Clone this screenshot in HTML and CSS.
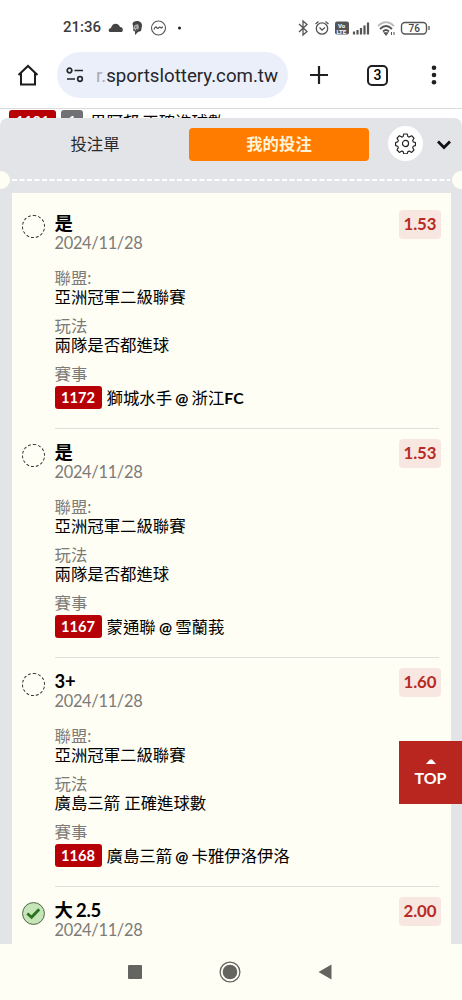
FILE: index.html
```html
<!DOCTYPE html>
<html lang="zh-Hant">
<head>
<meta charset="utf-8">
<title>我的投注</title>
<link rel="stylesheet" href="styles.css">
</head>
<body>
<div class="phone">
  <header class="status">
    <span class="clock">21:36</span>
    <svg class="notices" width="80" height="18" viewBox="0 0 80 18">
      <path d="M1.500 13c-2-2 0-4 1.500-4 1-5 7-6 9-1 3 0 3.500 3 2 5z" fill="#444"/>
      <path d="M24.500 4.500c2-4 10-3 9.500 2.500l-1 5-3 1-3 3v-3.500l-2-1 .5-2z" fill="#444"/><path d="M26 6.500l4-1.500 1 3-1 3-3 .5-1-2z" fill="#aaa"/><path d="M27 8h1.500M28 10.500h1.500" stroke="#444"/>
      <circle cx="50.500" cy="9" r="7" fill="none" stroke="#555" stroke-width="1.100"/>
      <path d="M46 10.500c1-3 2-3 3-1.500s2.500-2 3.500-.5 1-1 2.500 0" fill="none" stroke="#555" stroke-width="1.300"/>
      <circle cx="71.500" cy="9" r="1.500" fill="#222"/>
    </svg>
    <svg class="signals" width="136" height="18" viewBox="0 0 136 18" fill="none" stroke="#555" stroke-width="1.300">
      <path d="M1 5l8 7.500-4 3.500V2l4 3.500L1 13"/>
      <circle cx="24" cy="9.500" r="5.700"/><path d="M21.500 8.500l2.500 2.500 3-2.500M17.500 5l3-2.500M27.500 2.500l3 2.500"/>
      <rect x="37" y="2.500" width="14" height="13" rx="2" fill="#555" stroke="none"/>
      <g class="volte"><text x="40" y="8.500">Vo</text><text x="38.500" y="14.500">LTE</text></g>
      <path d="M56 15.500v-3M59.500 15.500v-4.500M63 15.500V9M66.500 15.500V6.500M70 15.500V3.500" stroke-width="2.200"/>
      <path d="M80 7c5-5 11-5 16 0" stroke="#bbb" stroke-width="1.800"/><path d="M82 10c4-4 8-4 12 0M85 12.500c2-2 4-2 6 0" stroke-width="1.800"/><path d="M86.500 14h3l-1.500 2z" fill="#555"/><path d="M93.500 13v3M96 13v3" stroke-width="1"/>
      <rect x="103.500" y="3.500" width="25" height="11.500" rx="3.500" stroke-width="1.400"/><path d="M131 7v4"/>
      <text class="charge" x="110.500" y="12.700">76</text>
    </svg>
  </header>
  <nav class="browser">
    <svg class="home" width="24" height="24" viewBox="0 0 24 24" fill="none" stroke="#1d1d20" stroke-width="2"><path d="M2.500 12L12 3l9.500 9M5 10v11.500h14V10"/></svg>
    <div class="address">
      <svg width="18" height="16" viewBox="0 0 18 16" fill="none" stroke="#25262c" stroke-width="1.700"><circle cx="3.500" cy="3.500" r="2.300"/><path d="M8.500 3.500H17M1 12h8"/><circle cx="14" cy="12" r="2.300"/></svg>
      <span class="url"><span class="fade">r.</span>sportslottery.com.tw</span>
    </div>
    <svg class="plus" width="20" height="20" viewBox="0 0 20 20" stroke="#202024" stroke-width="2.200"><path d="M1 10h18M10 1v18"/></svg>
    <span class="tabs-count">3</span>
    <svg class="more" width="6" height="20" viewBox="0 0 6 20" fill="#202024"><circle cx="3" cy="2.700" r="2.300"/><circle cx="3" cy="10" r="2.300"/><circle cx="3" cy="17.300" r="2.300"/></svg>
  </nav>
  <div class="behind"><span class="code">1181</span><span class="code grey">1</span><span class="match">果阿邦 正確進球數</span></div>
  <main class="slip">
    <div class="slip-head">
      <span class="tab">投注單</span>
      <span class="tab active">我的投注</span>
      <span class="gear"><svg width="21" height="21" viewBox="0 0 22 22" fill="none" stroke="#222" stroke-width="1.200" stroke-linejoin="round"><path d="M9.200 1h3.600l.7 2.700 1.400.6 2.500-1.400 2.500 2.500-1.400 2.500.6 1.400 2.300.7v3.200l-2.300.7-.6 1.400 1.400 2.500-2.500 2.500-2.500-1.400-1.400.6-.7 2.400H9.200l-.7-2.400-1.400-.6-2.500 1.400-2.500-2.500 1.400-2.500-.6-1.400-2.300-.7v-3.200l2.300-.7.6-1.400-1.400-2.500 2.500-2.500 2.500 1.400 1.400-.6z"/><circle cx="11" cy="11" r="3.200"/></svg></span>
      <svg class="down" width="16" height="10" viewBox="0 0 16 10" fill="none" stroke="#111" stroke-width="2.800"><path d="M2 1.500l6 6 6-6"/></svg>
    </div>
    <div class="tear"><i class="notch"></i><svg width="438" height="2" viewBox="0 0 438 2"><path d="M0 1h438" stroke="#fff" stroke-width="2" stroke-dasharray="5 2.500"/></svg><i class="notch"></i></div>
    <div class="paper">
      <article class="bet">
        <i class="mark"></i>
        <div class="body">
          <div class="top"><div><h2>是</h2><p class="date">2024/11/28</p></div><b class="odds">1.53</b></div>
          <dl><dt>聯盟:</dt><dd>亞洲冠軍二級聯賽</dd><dt>玩法</dt><dd>兩隊是否都進球</dd><dt>賽事</dt><dd class="game"><span class="code">1172</span><span>獅城水手 <em>@</em> 浙江<b>FC</b></span></dd></dl>
        </div>
      </article>
      <article class="bet">
        <i class="mark"></i>
        <div class="body">
          <div class="top"><div><h2>是</h2><p class="date">2024/11/28</p></div><b class="odds">1.53</b></div>
          <dl><dt>聯盟:</dt><dd>亞洲冠軍二級聯賽</dd><dt>玩法</dt><dd>兩隊是否都進球</dd><dt>賽事</dt><dd class="game"><span class="code">1167</span><span>蒙通聯 <em>@</em> 雪蘭莪</span></dd></dl>
        </div>
      </article>
      <article class="bet">
        <i class="mark"></i>
        <div class="body">
          <div class="top"><div><h2>3+</h2><p class="date">2024/11/28</p></div><b class="odds">1.60</b></div>
          <dl><dt>聯盟:</dt><dd>亞洲冠軍二級聯賽</dd><dt>玩法</dt><dd>廣島三箭 正確進球數</dd><dt>賽事</dt><dd class="game"><span class="code">1168</span><span>廣島三箭 <em>@</em> 卡雅伊洛伊洛</span></dd></dl>
        </div>
      </article>
      <article class="bet">
        <svg class="won" width="24" height="24" viewBox="0 0 24 24"><circle cx="12" cy="12" r="11.400" fill="#c5e5b9" stroke="#46603e"/><path d="M5.500 12l4.500 4 8-8.500" fill="none" stroke="#2b7321" stroke-width="3"/></svg>
        <div class="body">
          <div class="top"><div><h2>大 2.5</h2><p class="date">2024/11/28</p></div><b class="odds">2.00</b></div>
        </div>
      </article>
    </div>
  </main>
  <a class="to-top"><svg width="10" height="5" viewBox="0 0 10 5"><path d="M0 5l4-4.500h2L10 5z" fill="#fff"/></svg>TOP</a>
  <footer class="system">
    <svg width="14" height="14"><rect width="14" height="14" rx="1" fill="#646460"/></svg>
    <svg width="22" height="22" viewBox="0 0 22 22"><circle cx="11" cy="11" r="9.900" fill="none" stroke="#646460" stroke-width="1.300"/><circle cx="11" cy="11" r="7.300" fill="#646460"/></svg>
    <svg width="14" height="16" viewBox="0 0 14 16"><path d="M13.500.5v15L.5 8z" fill="#646460"/></svg>
  </footer>
</div>
</body>
</html>
```

FILE: styles.css
```css
* { box-sizing: border-box; }
body, h2, p, dl, dd { margin: 0; }
svg { display: block; flex: none; }
em, i { font-style: normal; }
.phone {
  position: relative;
  display: flex;
  flex-direction: column;
  width: 462px;
  height: 1000px;
  overflow: hidden;
  background: #fff;
  color: #000;
  font: 16.4px/19.4px Lato, "Noto Sans CJK TC", sans-serif;
}
.status {
  display: flex;
  align-items: center;
  height: 52px;
  padding: 3px 28px 0 63px;
  font-family: Roboto, sans-serif;
}
.clock { width: 38px; font-size: 15px; font-weight: 500; color: #3c3c3e; white-space: nowrap; padding-top: 1px; }
.notices { margin-left: 7px; }
.signals { margin-left: auto; }
.volte text { fill: #fff; stroke: none; font: bold 6px Roboto, sans-serif; }
.charge { fill: #444; stroke: none; font: 500 10px Roboto, sans-serif; }
.browser {
  display: flex;
  align-items: center;
  height: 57px;
  padding: 0 25px 10px 16px;
  border-bottom: 1px solid #dcdcdf;
}
.address {
  display: flex;
  align-items: center;
  gap: 12px;
  width: 231px;
  height: 46px;
  margin-left: 17px;
  padding-left: 9px;
  border-radius: 23px;
  background: #ebeff9;
}
.url { padding-top: 2px; font: 18.7px/24px Roboto, sans-serif; color: #25262c; white-space: nowrap; }
.fade { color: #a8acb6; }
.plus { margin-left: 21px; }
.tabs-count {
  width: 21px;
  height: 21px;
  margin-left: 38px;
  border: 2px solid #202024;
  border-radius: 5px;
  font: 500 14px/17px Roboto, sans-serif;
  text-align: center;
}
.more { margin-left: auto; }
.behind { display: flex; height: 9px; padding: 1px 0 0 9px; overflow: hidden; }
.code {
  flex: none;
  width: 47px;
  height: 23px;
  border-radius: 3px;
  background: #b60005;
  color: #fff;
  font-weight: 700;
  font-size: 14.6px;
  line-height: 23px;
  text-align: center;
}
.grey { width: 22px; margin-left: 5px; background: #707173; }
.match { margin-left: 7px; line-height: 23px; word-spacing: -1px; }
.slip { display: flex; flex-direction: column; height: 826px; border-radius: 8px 8px 0 0; background: #e3e4e7; }
.slip-head { display: flex; align-items: center; height: 53px; padding: 0 9px; }
.tab { width: 180px; height: 33px; border-radius: 4px; line-height: 31.500px; text-align: center; color: #2b2b2e; }
.tab:first-child { padding-right: 8px; }
.active { background: #ff7c00; color: #fff3d6; font-weight: 700; }
.gear { display: grid; place-items: center; width: 35px; height: 35px; margin: -2px 0 0 19px; border-radius: 50%; background: #fff; }
.down { margin: 1px 0 0 13px; }
.tear { display: flex; align-items: center; justify-content: space-between; height: 18px; }
.notch { width: 10px; height: 18px; border-radius: 0 9px 9px 0; background: #fffef5; }
.notch:last-child { border-radius: 9px 0 0 9px; }
.paper { flex: 1; min-height: 0; margin: 4px 11px 0 12px; padding: 7px 12px 0 10px; overflow: hidden; background: #fffef5; }
.bet { display: grid; grid-template-columns: 24px 1fr; column-gap: 8.500px; height: 229px; }
.mark, .won { width: 23px; height: 23px; margin-top: 15px; }
.mark { border: 1px dashed #333; border-radius: 50%; }
.body { border-bottom: 1px solid #e0dfda; padding-top: 13px; }
.top { display: flex; justify-content: space-between; height: 55px; margin-right: -2px; }
h2 { font-size: 18.4px; line-height: 20px; height: 20px; word-spacing: -1px; letter-spacing: -.2px; }
.date, dt { color: #7d7b77; }
.date { letter-spacing: -.3px; }
.odds { width: 42px; height: 29px; margin-top: -3px; border-radius: 4px; background: #f8e6e0; color: #b72b25; font-size: 16.8px; line-height: 28px; text-align: center; }
dl { white-space: nowrap; }
dt { height: 19.4px; }
dd { height: 19.4px; margin-bottom: 9.200px; }
.game { display: flex; height: 23px; gap: 5px; line-height: 23px; margin-top: 2.500px; word-spacing: -1px; }
.game em { font-size: 15.5px; font-weight: 700; }
.game b { font-size: 15.8px; }
.to-top {
  position: absolute;
  left: 399px;
  top: 741px;
  display: flex;
  flex-direction: column;
  align-items: center;
  gap: 4px;
  width: 63px;
  height: 63px;
  padding-top: 18px;
  background: #b9261f;
  color: #fff;
  font-size: 16px;
  line-height: 20px;
  font-weight: 700;
}
.system { display: flex; align-items: center; height: 56px; padding: 0 130px 0 128px; justify-content: space-between; background: #fffef5; }
```
